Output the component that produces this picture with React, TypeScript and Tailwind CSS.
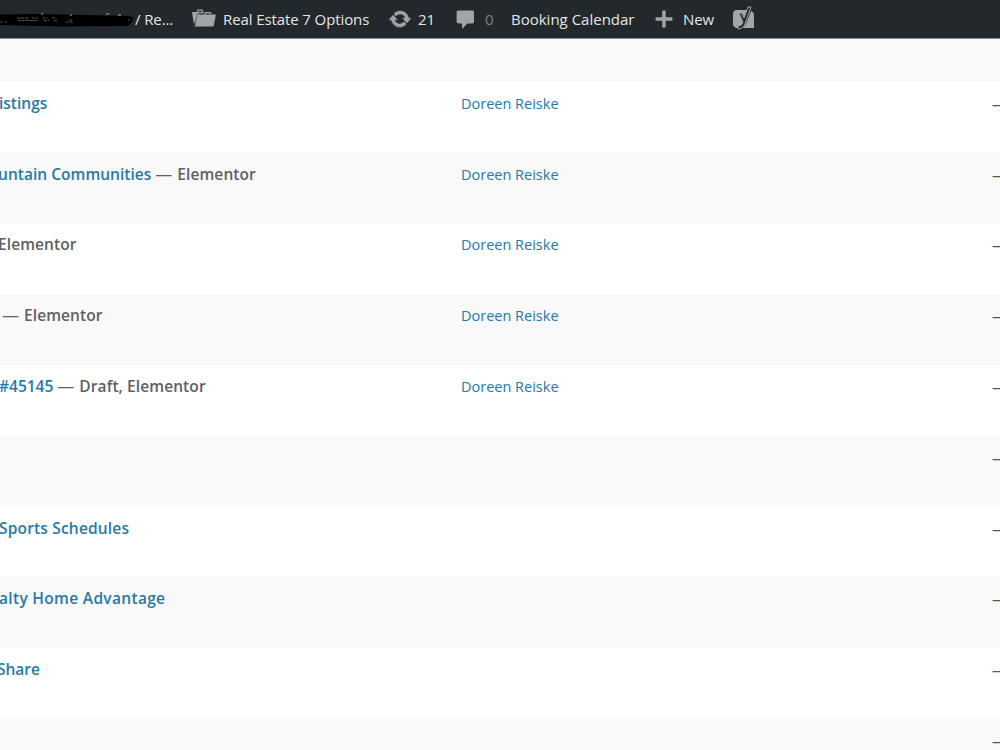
import type { ReactNode } from "react";

type Row = {
  height: string;
  title?: string;
  titleClass?: string;
  state?: string;
  dash?: string;
  stateClass?: string;
  author?: string;
};

const rows: Row[] = [
  { height: "h-[71px]", title: "istings", titleClass: "-ml-px", author: "Doreen Reiske" },
  { height: "h-[70px]", title: "untain Communities", titleClass: "-ml-[2px] tracking-[0.03px]", dash: "ml-[4px]", state: "Elementor", stateClass: "tracking-[0.08px]", author: "Doreen Reiske" },
  { height: "h-[71px]", state: "Elementor", stateClass: "-ml-[2px] tracking-[0.08px]", author: "Doreen Reiske" },
  { height: "h-[71px]", dash: "ml-[2px]", state: "Elementor", stateClass: "tracking-[0.08px]", author: "Doreen Reiske" },
  { height: "h-[71px]", title: "#45145", titleClass: "-ml-px", dash: "ml-[4px]", state: "Draft, Elementor", stateClass: "tracking-[0.1px]", author: "Doreen Reiske" },
  { height: "h-[71px]" },
  { height: "h-[70px]", title: "Sports Schedules", titleClass: "-ml-px tracking-[0.18px]" },
  { height: "h-[71px]", title: "alty Home Advantage", titleClass: "-ml-px tracking-[0.32px]" },
  { height: "h-[71px]", title: "Share", titleClass: "-ml-[3px]" },
  { height: "h-[71px]" },
];

function Icon({ children, className }: { children: ReactNode; className: string }) {
  return (
    <svg viewBox="0 0 20 20" fill="currentColor" className={`shrink-0 text-[#a0a5aa] ${className}`}>
      {children}
    </svg>
  );
}

function AdminBar() {
  return (
    <header className="relative flex h-[38px] items-center overflow-hidden whitespace-nowrap bg-[#23282d] text-[15px] font-medium leading-none tracking-[-0.1px] text-[#e4e5e6] shadow-[0_1px_0_#8a8c8e]">
      <div className="flex w-[192px] items-center">
        {/* Redacted site name */}
        <svg viewBox="0 0 135 24" className="h-6 w-[135px] shrink-0">
          <path d="M0 7.5 L40 7 L129 9 Q134 10 133 14 L128 19 L60 19.5 L0 18Z" fill="#000" />
          <path d="M17 11h12M32 11h6M43 11h5M52 11h4M18 13.5h20M44 13.5h5M54 13.5h4M66 15h8M69 13h3M0 15h2M5 15h2M128 13h2" stroke="#555" strokeDasharray="3 1" fill="none" />
          <path d="M41 7h2M70 8h2M106 7h3M118 8h3" stroke="#aaa" />
        </svg>
        <span>/ Re...</span>
      </div>
      <div className="flex w-[196px] items-center">
        <Icon className="-mt-[3px] size-6">
          <path d="M1.5 6H6v5l-3 5z" fill="#73787d" />
          <path d="M4 5H.78c-.37 0-.74.32-.69.84l1.56 9.99S3.5 8.47 3.86 6.7c.11-.53.61-.7.98-.7H10s-.7-2.08-.77-2.31C9.11 3.25 8.89 3 8.45 3H5.14c-.36 0-.7.23-.8.64C4.25 4.04 4 5 4 5zm4.88 0h-4s.42-1 .87-1h2.13c.48 0 1 1 1 1zM2.67 16.25c-.31.47-.76.75-1.26.75h15.73c.54 0 .92-.31 1.03-.83.44-2.19 1.68-8.44 1.68-8.44.07-.5-.3-.73-.62-.73H16V5.53c0-.16-.26-.53-.66-.53h-3.76c-.52 0-.87.58-.87.58L10 7H5.59c-.32 0-.63.19-.69.5 0 0-1.59 6.7-1.72 7.33-.07.37-.22.99-.51 1.42zM15.38 7H11s.58-1 1.13-1h2.29c.71 0 .96 1 .96 1z" />
        </Icon>
        <span className="ml-[7px]">Real Estate 7 Options</span>
      </div>
      <div className="flex w-[65px] items-center">
        <Icon className="size-6">
          <path d="M10.2 3.28c3.53 0 6.43 2.61 6.92 6h2.08l-3.5 4-3.5-4h2.32c-.45-1.97-2.21-3.45-4.32-3.45-1.45 0-2.73.71-3.54 1.78L4.95 5.66C6.23 4.2 8.11 3.28 10.2 3.28zm-.4 13.44c-3.52 0-6.43-2.61-6.92-6H.8l3.5-4c1.17 1.33 2.33 2.67 3.5 4H5.48c.45 1.97 2.21 3.45 4.32 3.45 1.45 0 2.73-.71 3.54-1.78l1.71 1.95c-1.28 1.46-3.15 2.38-5.25 2.38z" stroke="currentColor" strokeWidth="0.4" />
        </Icon>
        <span className="ml-[6px]">21</span>
      </div>
      <div className="flex w-[58px] items-center">
        <Icon className="mt-[2px] size-6">
          <path d="M5 2h11q.9 0 1.2.4t.3 1.1v8q0 .7-.4 1.1T16 13h-4l-4.5 4.5V13H5q-.82 0-1.41-.4T3 11.5v-8q0-.82.59-1.16T5 2z" />
        </Icon>
        <span className="ml-[8px] text-[#7d8287]">0</span>
      </div>
      <span className="w-[141px] tracking-normal">Booking Calendar</span>
      <div className="flex w-[80px] items-center">
        <Icon className="size-6">
          <path d="M17 8.6v2.9h-5.6V17H8.5v-5.5H3V8.6h5.5V3h2.9v5.6z" />
        </Icon>
        <span className="ml-[7px]">New</span>
      </div>
      <svg viewBox="0 0 24 26" className="h-[26px] w-6 shrink-0">
        <path d="M5 4h11L13 12l-3-5H7l4 10-3 5H5q-4-1-4-4V8q0-4 4-4zM19 5q3 1 3 4v13H11l3-4z" fill="#a0a5aa" />
        <path d="M19 1h-3l-4 11-2-5H7l4 9q-1 4-5 4v3q5 0 7-5z" fill="#23282d" stroke="#a0a5aa" />
      </svg>
    </header>
  );
}

export default function App() {
  return (
    <main className="h-[750px] w-[1000px] overflow-hidden bg-[#f9f9f9] font-['Open_Sans',sans-serif]">
      <AdminBar />
      <div className="h-11" />
      <div>
        {rows.map((row, i) => (
          <div key={i} className={`flex whitespace-nowrap pt-[10px] text-[15px] leading-6 odd:bg-white even:bg-[#f9f9f9] ${row.height}`}>
            <div className="-mt-px flex w-[461px] shrink-0 text-[15.5px] font-semibold text-[#606060]">
              {row.title && <a className={`text-[#267aa8] ${row.titleClass ?? ""}`}>{row.title}</a>}
              {row.dash && <span className={`mr-[5px] text-[17px] font-normal ${row.dash}`}>—</span>}
              {row.state && <span className={row.stateClass}>{row.state}</span>}
            </div>
            <a className="w-[531px] shrink-0 text-[14.5px] text-[#267aa8]">{row.author}</a>
            <span className="shrink-0 text-[#555555]">—</span>
          </div>
        ))}
      </div>
    </main>
  );
}
